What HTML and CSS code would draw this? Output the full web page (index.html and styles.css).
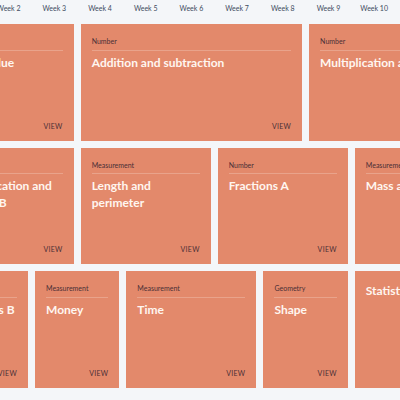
FILE: index.html
```html
<!DOCTYPE html>
<html lang="en">
<head>
<meta charset="utf-8">
<title>Scheme of learning</title>
<link rel="stylesheet" href="styles.css">
</head>
<body>
<div class="viewport">
  <div class="track">
    <div class="week">Week 1</div>
    <div class="week">Week 2</div>
    <div class="week">Week 3</div>
    <div class="week">Week 4</div>
    <div class="week">Week 5</div>
    <div class="week">Week 6</div>
    <div class="week">Week 7</div>
    <div class="week">Week 8</div>
    <div class="week">Week 9</div>
    <div class="week">Week 10</div>
    <div class="week">Week 11</div>
    <div class="week">Week 12</div>

    <div class="card span-3">
      <div class="cat">Number</div>
      <div class="rule"></div>
      <div class="title">Place value</div>
      <div class="view">VIEW</div>
    </div>
    <div class="card span-5">
      <div class="cat">Number</div>
      <div class="rule"></div>
      <div class="title">Addition and subtraction</div>
      <div class="view">VIEW</div>
    </div>
    <div class="card span-4">
      <div class="cat">Number</div>
      <div class="rule"></div>
      <div class="title">Multiplication and division A</div>
      <div class="view">VIEW</div>
    </div>

    <div class="card span-3">
      <div class="cat">Number</div>
      <div class="rule"></div>
      <div class="title">Multiplication and division B</div>
      <div class="view">VIEW</div>
    </div>
    <div class="card span-3">
      <div class="cat">Measurement</div>
      <div class="rule"></div>
      <div class="title">Length and perimeter</div>
      <div class="view">VIEW</div>
    </div>
    <div class="card span-3">
      <div class="cat">Number</div>
      <div class="rule"></div>
      <div class="title">Fractions A</div>
      <div class="view">VIEW</div>
    </div>
    <div class="card span-3">
      <div class="cat">Measurement</div>
      <div class="rule"></div>
      <div class="title">Mass and capacity</div>
      <div class="view">VIEW</div>
    </div>

    <div class="card span-2">
      <div class="cat">Number</div>
      <div class="rule"></div>
      <div class="title">Fractions B</div>
      <div class="view">VIEW</div>
    </div>
    <div class="card span-2">
      <div class="cat">Measurement</div>
      <div class="rule"></div>
      <div class="title">Money</div>
      <div class="view">VIEW</div>
    </div>
    <div class="card span-3">
      <div class="cat">Measurement</div>
      <div class="rule"></div>
      <div class="title">Time</div>
      <div class="view">VIEW</div>
    </div>
    <div class="card span-2">
      <div class="cat">Geometry</div>
      <div class="rule"></div>
      <div class="title">Shape</div>
      <div class="view">VIEW</div>
    </div>
    <div class="card span-2">
      <div class="title">Statistics</div>
      <div class="view">VIEW</div>
    </div>
  </div>
</div>
</body>
</html>
```
FILE: styles.css
```css
html, body {
  margin: 0;
  overflow: hidden;
}

body {
  background: #F4F6F9;
  font-family: Lato, "Noto Sans", sans-serif;
}

.viewport {
  width: 400px;
  height: 400px;
  overflow: hidden;
}

.track {
  display: grid;
  grid-template-columns: repeat(12, 38.7px);
  grid-template-rows: 17px repeat(3, 116.5px);
  gap: 7px;
  margin-left: -56.4px;
  width: max-content;
}

.week {
  font-size: 7px;
  line-height: 17px;
  color: #3d4b60;
  text-align: center;
  white-space: nowrap;
}

.card {
  background: #E3896B;
  padding: 12px 11px 10px;
  box-sizing: border-box;
  display: flex;
  flex-direction: column;
  min-width: 0;
  overflow: hidden;
}

.span-2 { grid-column: span 2; }
.span-3 { grid-column: span 3; }
.span-4 { grid-column: span 4; }
.span-5 { grid-column: span 5; }

.cat {
  font-size: 7px;
  line-height: 10px;
  color: #4a2f36;
}

.rule {
  height: 1px;
  background: rgba(255, 255, 255, 0.22);
  margin: 3.5px 0 4px;
}

.title {
  font-size: 12px;
  font-weight: 700;
  line-height: 16.5px;
  color: #FFF6F0;
}

.view {
  margin-top: auto;
  align-self: flex-end;
  font-size: 7px;
  line-height: 10px;
  letter-spacing: 0.3px;
  color: #4a2f36;
}
```
